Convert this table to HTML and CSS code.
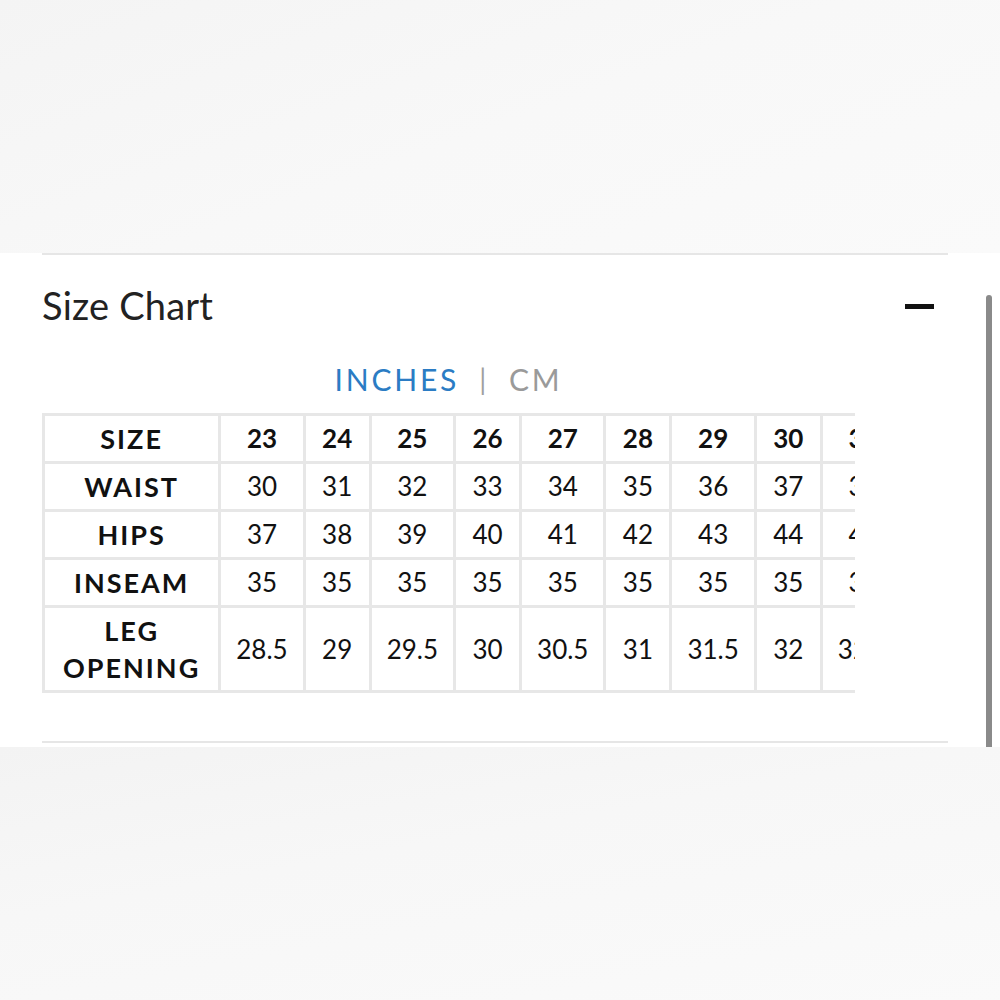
FILE: index.html
```html
<!DOCTYPE html>
<html lang="en">
<head>
<meta charset="utf-8">
<title>Size Chart</title>
<link rel="stylesheet" href="styles.css">
</head>
<body>
<div class="top-area"></div>
<section class="panel">
  <div class="accordion">
    <div class="acc-head">
      <h2 class="acc-title">Size Chart</h2>
      <span class="acc-toggle" aria-label="collapse"></span>
    </div>
    <div class="chart">
      <div class="units">
        <span class="unit active">INCHES</span>
        <span class="sep">|</span>
        <span class="unit">CM</span>
      </div>
      <div class="table-wrap">
        <table class="size-table">
          <tr class="head-row">
            <th>SIZE</th><td>23</td><td>24</td><td>25</td><td>26</td><td>27</td><td>28</td><td>29</td><td>30</td><td>31</td><td>32</td>
          </tr>
          <tr>
            <th>WAIST</th><td>30</td><td>31</td><td>32</td><td>33</td><td>34</td><td>35</td><td>36</td><td>37</td><td>38</td><td>39</td>
          </tr>
          <tr>
            <th>HIPS</th><td>37</td><td>38</td><td>39</td><td>40</td><td>41</td><td>42</td><td>43</td><td>44</td><td>45</td><td>46</td>
          </tr>
          <tr>
            <th>INSEAM</th><td>35</td><td>35</td><td>35</td><td>35</td><td>35</td><td>35</td><td>35</td><td>35</td><td>35</td><td>35</td>
          </tr>
          <tr class="tall-row">
            <th>LEG<br>OPENING</th><td>28.5</td><td>29</td><td>29.5</td><td>30</td><td>30.5</td><td>31</td><td>31.5</td><td>32</td><td>32.5</td><td>33</td>
          </tr>
        </table>
      </div>
    </div>
  </div>
  <div class="scrollbar"></div>
</section>
<div class="bottom-area"></div>
</body>
</html>
```
FILE: styles.css
```css
html, body {
  margin: 0;
  padding: 0;
}
body {
  background: #f7f7f7;
  font-family: Lato, "Noto Sans", "Liberation Sans", sans-serif;
  color: #111;
  width: 1000px;
  height: 1000px;
  overflow: hidden;
}
.top-area {
  height: 253px;
  background: linear-gradient(160deg, #f4f4f4 0%, #f8f8f8 50%, #fafafa 100%);
}
.bottom-area {
  height: 255px;
  background: linear-gradient(170deg, #f3f3f3 0%, #f7f7f7 40%, #fafafa 100%);
}
.panel {
  position: relative;
  background: #ffffff;
  padding: 0 52px 4px 42px;
}
.accordion {
  border-top: 2px solid #e6e6e6;
  border-bottom: 2px solid #e6e6e6;
  padding-bottom: 48px;
}
.acc-head {
  display: flex;
  align-items: center;
  justify-content: space-between;
  height: 100px;
  padding-right: 14px;
}
.acc-title {
  margin: 0;
  font-weight: 400;
  font-size: 38px;
  color: #222;
  letter-spacing: 0.2px;
}
.acc-toggle {
  display: block;
  width: 29px;
  height: 5px;
  background: #111;
  margin-top: 2px;
}
.chart {
  width: 813px;
}
.units {
  display: flex;
  justify-content: center;
  align-items: center;
  gap: 20px;
  font-size: 30px;
  letter-spacing: 2.8px;
  height: 48px;
  margin-bottom: 10px;
}
.unit {
  color: #9a9a9a;
}
.unit.active {
  color: #2b7cc4;
}
.sep {
  color: #a0a0a0;
  font-size: 28px;
}
.table-wrap {
  width: 813px;
  overflow: hidden;
}
.size-table {
  width: max-content;
  border-collapse: collapse;
  border: 3px solid #e7e7e7;
}
.size-table th,
.size-table td {
  border: 3px solid #e7e7e7;
  height: 45px;
  padding: 0 15px;
  width: 33px;
  text-align: center;
  white-space: nowrap;
  font-size: 26px;
  line-height: 37px;
}
.size-table th {
  width: auto;
  font-weight: 700;
  font-size: 27px;
  letter-spacing: 2px;
  padding: 0 18px;
}
.head-row td {
  font-weight: 700;
}
.tall-row th,
.tall-row td {
  height: 82px;
}
.scrollbar {
  position: absolute;
  right: 8px;
  top: 42px;
  bottom: 0;
  width: 6px;
  border-radius: 3px 3px 0 0;
  background: #8a8a8a;
}
```
